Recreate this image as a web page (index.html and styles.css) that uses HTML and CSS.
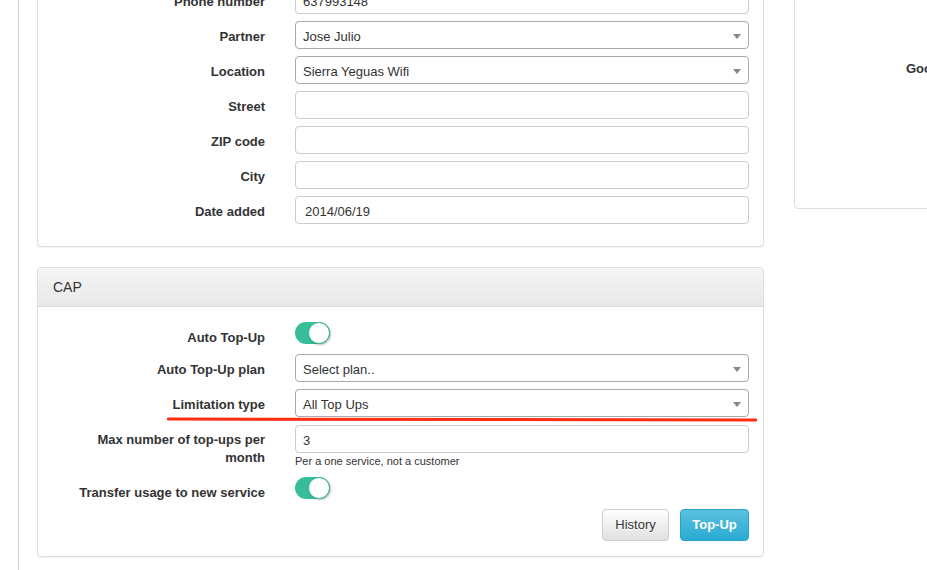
FILE: index.html
```html
<!DOCTYPE html>
<html>
<head>
<meta charset="utf-8">
<link rel="stylesheet" href="styles.css">
</head>
<body>
<div class="page">
  <div class="outer">
    <div class="panel panel-info">
      <div class="panel-body first-body">
        <div class="form-row">
          <label class="lbl">Phone number</label>
          <div class="ctl"><div class="input">637993148</div></div>
        </div>
        <div class="form-row">
          <label class="lbl">Partner</label>
          <div class="ctl"><div class="input select">Jose Julio<span class="caret"></span></div></div>
        </div>
        <div class="form-row">
          <label class="lbl">Location</label>
          <div class="ctl"><div class="input select">Sierra Yeguas Wifi<span class="caret"></span></div></div>
        </div>
        <div class="form-row">
          <label class="lbl">Street</label>
          <div class="ctl"><div class="input"></div></div>
        </div>
        <div class="form-row">
          <label class="lbl">ZIP code</label>
          <div class="ctl"><div class="input"></div></div>
        </div>
        <div class="form-row">
          <label class="lbl">City</label>
          <div class="ctl"><div class="input"></div></div>
        </div>
        <div class="form-row">
          <label class="lbl">Date added</label>
          <div class="ctl"><div class="input date">2014/06/19</div></div>
        </div>
      </div>
    </div>

    <div class="panel panel-cap">
      <div class="panel-heading">CAP</div>
      <div class="panel-body cap-body">
        <div class="form-row r-toggle1">
          <label class="lbl">Auto Top-Up</label>
          <div class="ctl"><span class="toggle"><span class="knob"></span></span></div>
        </div>
        <div class="form-row r-plan">
          <label class="lbl">Auto Top-Up plan</label>
          <div class="ctl"><div class="input select">Select plan..<span class="caret"></span></div></div>
        </div>
        <div class="form-row r-limit">
          <label class="lbl">Limitation type</label>
          <div class="ctl"><div class="input select">All Top Ups<span class="caret"></span></div></div>
          <span class="annotation"></span>
        </div>
        <div class="form-row r-max">
          <label class="lbl lbl-wrap">Max number of top-ups per month</label>
          <div class="ctl">
            <div class="input">3</div>
            <p class="help">Per a one service, not a customer</p>
          </div>
        </div>
        <div class="form-row r-toggle2">
          <label class="lbl">Transfer usage to new service</label>
          <div class="ctl"><span class="toggle"><span class="knob"></span></span></div>
        </div>
        <div class="actions">
          <button class="btn btn-default">History</button>
          <button class="btn btn-info">Top-Up</button>
        </div>
      </div>
    </div>
  </div>

  <div class="side">
    <div class="side-panel">
      <span class="side-label">Google Maps</span>
    </div>
  </div>
</div>
</body>
</html>
```

FILE: styles.css
```css
html, body {
  margin: 0;
  padding: 0;
  overflow: hidden;
  background: #ffffff;
}

body {
  font-family: "Liberation Sans", Arial, sans-serif;
  font-size: 13px;
  color: #333333;
}

.page {
  display: flex;
  align-items: flex-start;
  width: 1200px;
  margin-top: -30px;
}

.outer {
  margin-left: 18px;
  border-left: 1px solid #cfcfcf;
  padding-left: 18px;
  width: 727px;
  min-height: 640px;
}

.panel {
  box-sizing: border-box;
  width: 727px;
  background: #fff;
  border: 1px solid #dddddd;
  border-radius: 4px;
  box-shadow: 0 1px 1px rgba(0, 0, 0, 0.05);
}

.panel-cap {
  margin-top: 20px;
}

.panel-heading {
  height: 38px;
  line-height: 38px;
  padding: 0 15px;
  font-size: 14px;
  color: #333;
  background: linear-gradient(#f5f5f5, #e8e8e8);
  border-bottom: 1px solid #dddddd;
  border-radius: 3px 3px 0 0;
}

.panel-body {
  padding: 0 14px;
}

.first-body {
  padding-top: 15px;
  padding-bottom: 22px;
  display: flex;
  flex-direction: column;
  gap: 7px;
}

.cap-body {
  padding-top: 15px;
  padding-bottom: 15px;
}

.form-row {
  display: flex;
  align-items: flex-start;
  position: relative;
}

.lbl {
  box-sizing: border-box;
  width: 213px;
  flex: none;
  margin-right: 30px;
  padding-top: 7px;
  line-height: 18px;
  text-align: right;
  font-weight: bold;
  color: #333;
}

.lbl-wrap {
  padding-top: 6px;
  padding-left: 30px;
}

.ctl {
  flex: 1;
  min-width: 0;
}

.input {
  box-sizing: border-box;
  position: relative;
  height: 28px;
  line-height: 27px;
  padding: 1px 7px 0;
  border: 1px solid #cccccc;
  border-radius: 4px;
  background: #fff;
  color: #333;
  font-size: 13px;
  white-space: nowrap;
}

.input.date {
  padding-left: 9px;
}

.input.select {
  border-color: #aaaaaa;
}

.caret {
  position: absolute;
  right: 7px;
  top: 12px;
  width: 0;
  height: 0;
  border-left: 4px solid transparent;
  border-right: 4px solid transparent;
  border-top: 5px solid #888888;
}

.toggle {
  display: block;
  position: relative;
  width: 35px;
  height: 22px;
  border-radius: 11px;
  background: #37bd98;
}

.knob {
  position: absolute;
  right: 0;
  top: 0;
  box-sizing: border-box;
  width: 22px;
  height: 22px;
  border-radius: 50%;
  background: #fff;
  border: 1px solid #37bd98;
  box-shadow: 1px 1px 2px rgba(0, 0, 0, 0.25);
}

.r-toggle1 { margin-bottom: 7px; }
.r-plan { margin-bottom: 7px; }
.r-limit { margin-bottom: 8px; }
.r-max { margin-bottom: 9px; }
.r-toggle2 { margin-bottom: 7px; }

.help {
  margin: 1px 0 0;
  font-size: 11px;
  line-height: 14px;
  color: #333;
}

.annotation {
  position: absolute;
  left: 115px;
  top: 29px;
  width: 590px;
  height: 3px;
  background: #ff2b12;
  border-radius: 1px;
  transform: rotate(0.1deg);
}

.actions {
  display: flex;
  justify-content: flex-end;
  gap: 11px;
}

.btn {
  box-sizing: border-box;
  height: 32px;
  padding: 0 12px;
  border-radius: 4px;
  font-family: "Liberation Sans", Arial, sans-serif;
  font-size: 13px;
  line-height: 30px;
  cursor: pointer;
}

.btn-default {
  width: 67px;
  color: #333;
  background: linear-gradient(#ffffff, #e0e0e0);
  border: 1px solid #cccccc;
  text-shadow: 0 1px 0 #fff;
}

.btn-info {
  width: 69px;
  padding: 0 10px;
  color: #fff;
  font-weight: bold;
  background: linear-gradient(#5bc0de, #2aabd2);
  border: 1px solid #28a4c9;
}

.side {
  margin-left: 30px;
  width: 400px;
}

.side-panel {
  box-sizing: border-box;
  height: 239px;
  border: 1px solid #dddddd;
  border-radius: 4px;
  padding: 89px 0 0 111px;
  line-height: 18px;
  font-weight: bold;
  white-space: nowrap;
}
```
